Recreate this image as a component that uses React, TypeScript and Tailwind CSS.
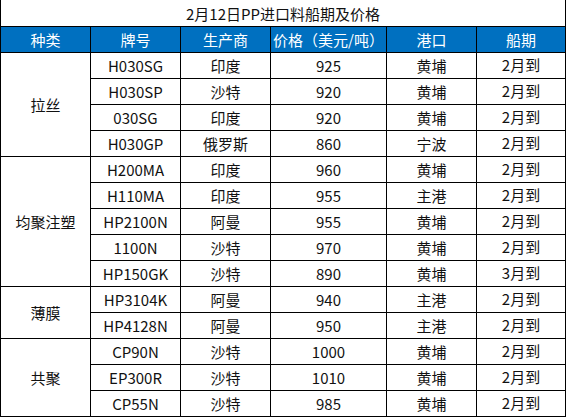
const groups = [
  {
    name: '拉丝',
    span: 'row-span-4',
    rows: [
      ['H030SG', '印度', '925', '黄埔', '2月到'],
      ['H030SP', '沙特', '920', '黄埔', '2月到'],
      ['030SG', '印度', '920', '黄埔', '2月到'],
      ['H030GP', '俄罗斯', '860', '宁波', '2月到'],
    ],
  },
  {
    name: '均聚注塑',
    span: 'row-span-5',
    rows: [
      ['H200MA', '印度', '960', '黄埔', '2月到'],
      ['H110MA', '印度', '955', '主港', '2月到'],
      ['HP2100N', '阿曼', '955', '黄埔', '2月到'],
      ['1100N', '沙特', '970', '黄埔', '2月到'],
      ['HP150GK', '沙特', '890', '黄埔', '3月到'],
    ],
  },
  {
    name: '薄膜',
    span: 'row-span-2',
    rows: [
      ['HP3104K', '阿曼', '940', '主港', '2月到'],
      ['HP4128N', '阿曼', '950', '主港', '2月到'],
    ],
  },
  {
    name: '共聚',
    span: 'row-span-3',
    rows: [
      ['CP90N', '沙特', '1000', '黄埔', '2月到'],
      ['EP300R', '沙特', '1010', '黄埔', '2月到'],
      ['CP55N', '沙特', '985', '黄埔', '2月到'],
    ],
  },
];

const headers = ['种类', '牌号', '生产商', '价格（美元/吨）', '港口', '船期'];

const App = () => {
  return (
    <div className="w-[567px] h-[417px] bg-white text-[15px] text-[#111] font-['Microsoft_YaHei','Noto_Sans_CJK_SC',sans-serif]">
      <div className="w-[566px] grid grid-cols-[89px_89px_89px_115px_89px_88px] grid-rows-[26px_repeat(15,25px)] gap-px bg-black px-px pb-px">
        {/* Title */}
        <div className="col-span-6 bg-white flex items-center justify-center leading-none">
          2月12日PP进口料船期及价格
        </div>

        {/* Header */}
        {headers.map((h) => (
          <div key={h} className="bg-[#0070c0] text-white flex items-center justify-center leading-none">
            {h}
          </div>
        ))}

        {/* Body */}
        {groups.map((g) =>
          g.rows.map((row, i) => (
            <>
              {i === 0 && (
                <div key={g.name} className={`${g.span} bg-white flex items-center justify-center leading-none`}>
                  {g.name}
                </div>
              )}
              {row.map((cell, j) => (
                <div
                  key={`${g.name}-${i}-${j}`}
                  className={`bg-white flex justify-center leading-none ${j === 4 ? 'items-center pb-[3px]' : 'items-center'}`}
                >
                  {cell}
                </div>
              ))}
            </>
          ))
        )}
      </div>
    </div>
  );
};

export default App;
